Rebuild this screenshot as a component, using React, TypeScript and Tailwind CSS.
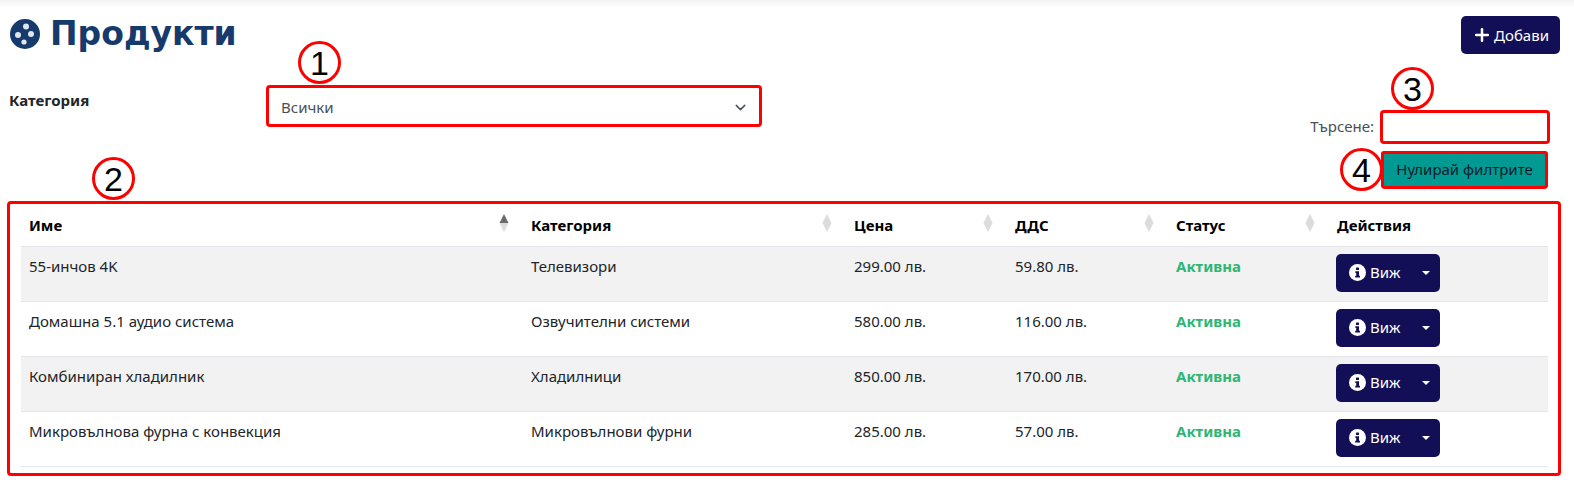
import { Plus, ChevronDown } from "lucide-react";

const products = [
  { name: "55-инчов 4K", category: "Телевизори", price: "299.00 лв.", vat: "59.80 лв." },
  { name: "Домашна 5.1 аудио система", category: "Озвучителни системи", price: "580.00 лв.", vat: "116.00 лв." },
  { name: "Комбиниран хладилник", category: "Хладилници", price: "850.00 лв.", vat: "170.00 лв." },
  { name: "Микровълнова фурна с конвекция", category: "Микровълнови фурни", price: "285.00 лв.", vat: "57.00 лв." },
];

function SortIcon({ active = false }: { active?: boolean }) {
  return (
    <svg width="10" height="18" viewBox="0 0 10 18" className="absolute right-[14px] top-[13px]">
      <path d="M5 0 L9.5 9 H0.5 Z" fill={active ? "#6b6b6b" : "#dcdcdc"} />
      <path d="M5 18 L9.5 9 H0.5 Z" fill="#dcdcdc" />
    </svg>
  );
}

function Th({ label, width, sort = true, active = false }: { label: string; width: string; sort?: boolean; active?: boolean }) {
  return (
    <th className={`relative h-[45px] pl-[8px] pt-[4px] text-left text-[15px] font-bold text-black ${width}`}>
      {label}
      {sort && <SortIcon active={active} />}
    </th>
  );
}

function InfoIcon() {
  return (
    <svg width="17" height="17" viewBox="0 0 17 17" className="mr-[4px]">
      <circle cx="8.5" cy="8.5" r="8.5" fill="#fff" />
      <rect x="7" y="3.4" width="3" height="2.6" rx="0.6" fill="#130f57" />
      <path d="M6.4 7.2 H10 V11.8 H11 V13.6 H6.2 V11.8 H7.2 V9 H6.4 Z" fill="#130f57" />
    </svg>
  );
}

function Marker({ n, className }: { n: number; className: string }) {
  return (
    <div className={`absolute flex h-[43px] w-[43px] items-center justify-center rounded-full border-[3px] border-[#ff0000] bg-white text-[34px] leading-none text-black font-['Liberation_Sans',sans-serif] ${className}`}>
      {n}
    </div>
  );
}

function Outline({ className }: { className: string }) {
  return <div className={`pointer-events-none absolute rounded-[4px] border-[3px] border-[#ff0000] ${className}`} />;
}

export default function App() {
  return (
    <div lang="bg" className="relative h-[494px] w-[1574px] overflow-hidden bg-white font-['Noto_Sans',sans-serif] text-[15px] text-[#212529]">
      <div className="h-[8px] bg-gradient-to-b from-[#f3f3f3] to-white" />

      {/* Header */}
      <div className="flex items-start justify-between pl-[10px] pr-[14px] pt-[8px]">
        <div className="flex items-center gap-[10px]">
          <svg width="30" height="30" viewBox="0 0 30 30">
            <circle cx="15" cy="15" r="15" fill="#153a6b" />
            <circle cx="16" cy="7.5" r="3" fill="#dfe6f0" />
            <circle cx="8" cy="16" r="3" fill="#dfe6f0" />
            <circle cx="21" cy="15" r="3" fill="#dfe6f0" />
            <circle cx="14" cy="23" r="2.6" fill="#dfe6f0" />
          </svg>
          <h1 className="font-['DejaVu_Sans',sans-serif] text-[33px] font-bold leading-[36px] text-[#153a6b]">Продукти</h1>
        </div>
        <button className="flex h-[38px] w-[99px] items-center justify-center gap-[2px] rounded-[5px] bg-[#130f57] text-[15px] text-white">
          <Plus size={20} strokeWidth={3} />
          Добави
        </button>
      </div>

      {/* Filters */}
      <div className="flex h-[146px] items-start pl-[9px] pr-[24px] pt-[32px]">
        <label className="w-[258px] pt-[3px] text-[15px] font-bold">Категория</label>
        <div className="flex h-[42px] w-[492px] items-center justify-between pl-[14px] pr-[10px] text-[15px] text-[#495057]">
          Всички
          <ChevronDown size={17} strokeWidth={2} />
        </div>
        <div className="ml-auto flex flex-col items-end">
          <div className="mt-[24px] flex items-center gap-[7px]">
            <span className="text-[15px] text-[#495057]">Търсене:</span>
            <input className="h-[33px] w-[169px] bg-white outline-none" />
          </div>
          <button className="mt-[8px] mr-[2px] h-[37px] w-[167px] rounded-[3px] bg-[#009a93] text-[15px] text-[#0b1a2a]">Нулирай филтрите</button>
        </div>
      </div>

      {/* Table */}
      <div className="pl-[21px] pr-[26px] pt-[1px]">
        <table className="w-full table-fixed border-collapse">
          <thead>
            <tr className="border-b border-[#e4e6ec]">
              <Th label="Име" width="w-[502px]" active />
              <Th label="Категория" width="w-[323px]" />
              <Th label="Цена" width="w-[161px]" />
              <Th label="ДДС" width="w-[161px]" />
              <Th label="Статус" width="w-[161px]" />
              <Th label="Действия" width="" sort={false} />
            </tr>
          </thead>
          <tbody>
            {products.map((p, i) => (
              <tr key={p.name} className={`h-[55px] border-b border-[#e4e6ec] align-top ${i % 2 === 0 ? "bg-[#f2f2f2]" : "bg-white"}`}>
                <td className="pl-[8px] pt-[8px]">{p.name}</td>
                <td className="pl-[8px] pt-[8px]">{p.category}</td>
                <td className="pl-[8px] pt-[8px]">{p.price}</td>
                <td className="pl-[8px] pt-[8px]">{p.vat}</td>
                <td className="pl-[8px] pt-[8px] font-bold text-[#2fb673]">Активна</td>
                <td className="pl-[7px] pt-[7px]">
                  <button className="flex h-[38px] w-[104px] items-center rounded-[5px] bg-[#130f57] pl-[13px] text-white">
                    <InfoIcon />
                    Виж
                    <span className="ml-[22px] h-0 w-0 border-x-[4px] border-t-[4px] border-x-transparent border-t-white" />
                  </button>
                </td>
              </tr>
            ))}
          </tbody>
        </table>
      </div>

      {/* Annotations */}
      <Outline className="left-[266px] top-[85px] h-[42px] w-[496px]" />
      <Outline className="left-[1380px] top-[110px] h-[34px] w-[170px]" />
      <Outline className="left-[1381px] top-[151px] h-[38px] w-[167px]" />
      <Outline className="left-[7px] top-[201px] h-[275px] w-[1554px]" />
      <Marker n={1} className="left-[298px] top-[41px]" />
      <Marker n={2} className="left-[92px] top-[157px]" />
      <Marker n={3} className="left-[1391px] top-[67px]" />
      <Marker n={4} className="left-[1340px] top-[148px]" />
    </div>
  );
}
